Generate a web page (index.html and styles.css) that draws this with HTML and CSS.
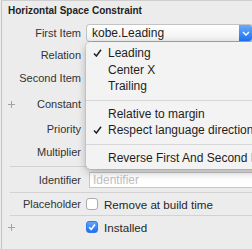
FILE: index.html
```html
<!DOCTYPE html>
<html lang="en">
<head>
  <meta charset="UTF-8">
  <title>Horizontal Space Constraint</title>
  <link rel="stylesheet" href="styles.css">
</head>
<body>
<div class="inspector">
  <div class="section-title">Horizontal Space Constraint</div>

  <div class="form">
    <div class="row row-first">
      <div class="label"><span>First Item</span></div>
      <div class="popup">
        <span class="popup-text">kobe.Leading</span>
        <span class="popup-arrow">
          <svg width="8" height="5" viewBox="0 0 8 5"><path d="M1 1 L4 4 L7 1" fill="none" stroke="#fff" stroke-width="1.4"/></svg>
        </span>
      </div>
    </div>
    <!-- these controls sit under the open menu -->
    <div class="row row-relation">
      <div class="label"><span>Relation</span></div>
      <div class="popup"></div>
    </div>
    <div class="row row-second">
      <div class="label"><span>Second Item</span></div>
      <div class="popup"></div>
    </div>
    <div class="row row-constant">
      <div class="label">
        <svg class="add" width="7" height="7" viewBox="0 0 7 7"><path d="M3.5 0 V7 M0 3.5 H7" stroke="#a3a3a3" stroke-width="1"/></svg>
        <span>Constant</span>
      </div>
      <div class="field"></div>
    </div>
    <div class="row row-priority">
      <div class="label"><span>Priority</span></div>
      <div class="field"></div>
    </div>
    <div class="row row-multiplier">
      <div class="label"><span>Multiplier</span></div>
      <div class="field"></div>
    </div>

    <div class="divider"></div>

    <div class="row row-identifier">
      <div class="label"><span>Identifier</span></div>
      <div class="field field-empty">Identifier</div>
    </div>

    <div class="divider"></div>

    <div class="row row-check">
      <div class="label"><span>Placeholder</span></div>
      <label class="check">
        <span class="box"></span>
        <span>Remove at build time</span>
      </label>
    </div>

    <div class="divider"></div>

    <div class="row row-check">
      <div class="label">
        <svg class="add" width="7" height="7" viewBox="0 0 7 7"><path d="M3.5 0 V7 M0 3.5 H7" stroke="#a3a3a3" stroke-width="1"/></svg>
      </div>
      <label class="check">
        <span class="box box-on">
          <svg width="10" height="10" viewBox="0 0 10 10"><path d="M2.2 5.2 L4.2 7.4 L7.9 2.4" fill="none" stroke="#fff" stroke-width="1.6"/></svg>
        </span>
        <span>Installed</span>
      </label>
    </div>
  </div>

  <!-- open popup menu for First Item -->
  <div class="menu">
    <div class="menu-item checked">Leading</div>
    <div class="menu-item">Center X</div>
    <div class="menu-item">Trailing</div>
    <div class="menu-sep"></div>
    <div class="menu-item">Relative to margin</div>
    <div class="menu-item checked">Respect language direction</div>
    <div class="menu-sep"></div>
    <div class="menu-item">Reverse First And Second Item</div>
  </div>
</div>
</body>
</html>
```

FILE: styles.css
```css
html,
body {
  margin: 0;
  overflow: hidden;
  background-color: #ececec;
}
body {
  font-family: 'Liberation Sans', Arial, sans-serif;
  color: #2b2b2b;
}
.inspector {
  position: relative;
  width: 251px;
  height: 260px;
  margin-left: 1px;
  border-left: 1px solid #c4c4c4;
  border-top: 1px solid #cfcfcf;
  background-color: #ececec;
}
.section-title {
  height: 20px;
  line-height: 19px;
  padding-left: 6px;
  font-size: 10px;
  font-weight: bold;
  color: #222;
}
.form {
  padding-top: 1px;
}
.row {
  display: grid;
  grid-template-columns: 79px 1fr;
  column-gap: 5px;
  align-items: center;
}
.row-first,
.row-relation,
.row-priority,
.row-check {
  height: 22px;
}
.row-second {
  height: 24px;
}
.row-constant {
  height: 28px;
}
.row-multiplier {
  height: 23px;
}
.row-identifier {
  height: 25px;
}
.label {
  display: flex;
  align-items: center;
  font-size: 11px;
  color: #333;
}
.label span {
  margin-left: auto;
}
.add {
  margin-left: 6px;
}
.divider {
  height: 1px;
  margin-left: 8px;
  background-color: #d2d2d2;
}
.row-multiplier + .divider {
  margin-top: 3px;
}
.popup {
  display: flex;
  align-items: center;
  height: 16px;
  border: 1px solid #c3c3c3;
  border-bottom-color: #b0b0b0;
  border-radius: 4px;
  background: linear-gradient(#ffffff, #f0f0f0);
  font-size: 12px;
  color: #222;
  overflow: hidden;
}
.popup-text {
  flex: 1;
  padding-left: 5px;
  white-space: nowrap;
}
.popup-arrow {
  display: flex;
  align-items: center;
  justify-content: center;
  width: 13px;
  height: 18px;
  background: linear-gradient(#6aaefa, #1a70f5);
}
.field {
  height: 14px;
  line-height: 14px;
  margin-left: 3px;
  padding-left: 3px;
  border: 1px solid #c6c6c6;
  background-color: #fff;
  font-size: 12px;
  color: #222;
}
.field-empty {
  color: #c0c0c0;
}
.check {
  display: flex;
  align-items: center;
  gap: 6px;
  font-size: 11.6px;
  color: #262626;
}
.box {
  display: flex;
  align-items: center;
  justify-content: center;
  box-sizing: border-box;
  width: 12px;
  height: 12px;
  border: 1px solid #ababab;
  border-radius: 3px;
  background-color: #fff;
}
.box-on {
  border-color: #2f78e6;
  background: linear-gradient(#5fa6fb, #1f6ff3);
}

/* popup menu */
.menu {
  position: absolute;
  left: 84px;
  top: 41px;
  width: 200px;
  box-sizing: border-box;
  padding: 3px 0;
  border-radius: 5px;
  background-color: rgba(243, 243, 243, 0.98);
  box-shadow: 0 3px 9px rgba(0, 0, 0, 0.28), 0 0 0 1px rgba(0, 0, 0, 0.06);
}
.menu-item {
  position: relative;
  height: 16.5px;
  line-height: 16.5px;
  padding-left: 22px;
  font-size: 12px;
  color: #1e1e1e;
  white-space: nowrap;
}
.menu-item.checked::before {
  content: '';
  position: absolute;
  left: 7px;
  top: 4px;
  width: 9px;
  height: 8px;
  background: url("data:image/svg+xml;utf8,<svg xmlns='http://www.w3.org/2000/svg' width='9' height='8' viewBox='0 0 9 8'><path d='M1 4.4 L3.4 7 L8 0.8' fill='none' stroke='%23222' stroke-width='1.5'/></svg>") no-repeat;
}
.menu-sep {
  height: 1px;
  margin: 5px 0;
  background-color: #d6d6d6;
}
```
